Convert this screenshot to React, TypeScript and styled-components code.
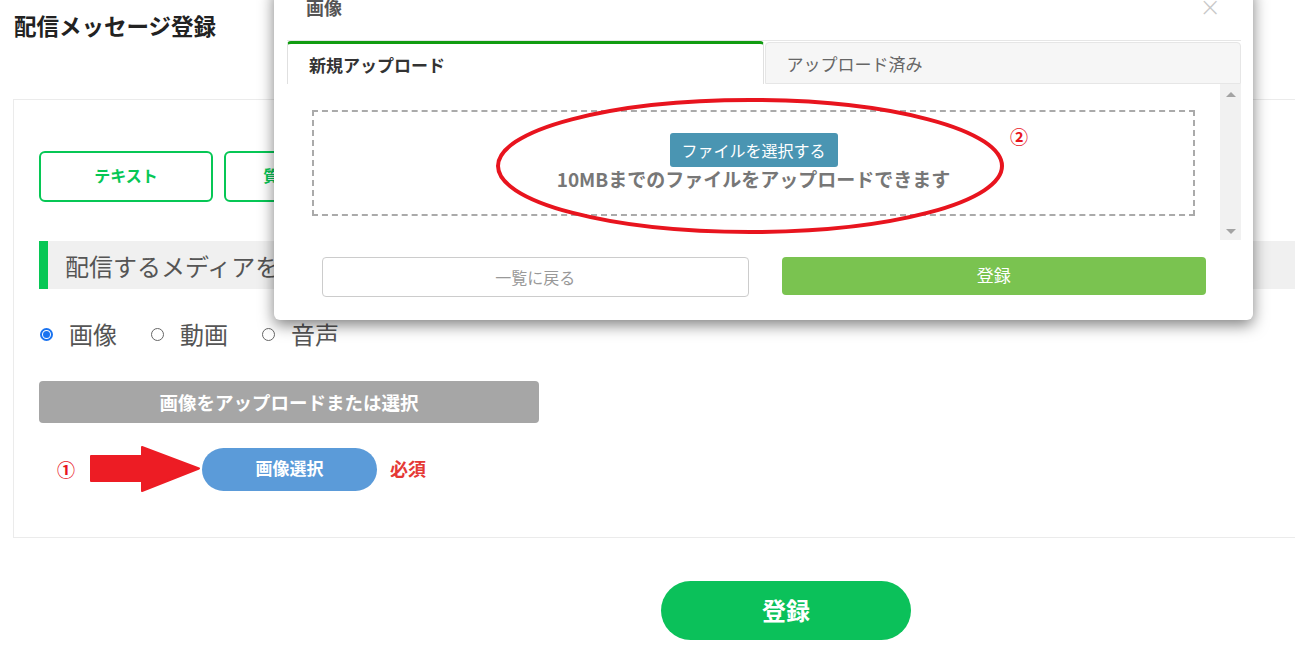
import React from 'react';
import styled, { createGlobalStyle } from 'styled-components';

const GlobalStyle = createGlobalStyle`
  html, body {
    margin: 0;
    padding: 0;
    background: #fff;
    overflow: hidden;
  }
  body {
    font-family: "Noto Sans CJK JP", "Noto Sans", sans-serif;
    color: #333;
  }
  * {
    box-sizing: border-box;
  }
`;

const Page = styled.div`
  position: relative;
  width: 1295px;
  height: 652px;
  overflow: hidden;
`;

const Title = styled.h1`
  margin: 10px 0 59px 14px;
  font-size: 22.5px;
  line-height: 30px;
  font-weight: 700;
  color: #222;
`;

const Card = styled.div`
  margin-left: 13px;
  margin-right: -40px;
  border: 1px solid #ebebeb;
  padding: 51px 0 45px 25px;
`;

const TypeButtons = styled.div`
  display: flex;
  gap: 11px;
`;

const TypeButton = styled.button`
  width: 174px;
  height: 51px;
  border: 2px solid #06c755;
  border-radius: 6px;
  background: #fff;
  color: #06c755;
  font-family: inherit;
  font-size: 16px;
  font-weight: 700;
  padding-bottom: 4px;
`;

const SectionHeading = styled.div`
  margin-top: 39px;
  height: 48px;
  display: flex;
  align-items: center;
  background: #f0f0f0;
  border-left: 9px solid #06c755;
  padding-left: 17px;
  font-size: 24px;
  color: #555;
  white-space: nowrap;
`;

const RadioRow = styled.div`
  margin-top: 28px;
  display: flex;
  gap: 34px;
  height: 34px;
  align-items: center;
  padding-left: 1px;
`;

const RadioLabel = styled.label`
  display: flex;
  align-items: center;
  gap: 16px;
  font-size: 24px;
  line-height: 34px;
  color: #555;
`;

const RadioMark = styled.span<{ $checked?: boolean }>`
  width: 13px;
  height: 13px;
  border-radius: 50%;
  border: ${(p) => (p.$checked ? '2px solid #1a73f0' : '1px solid #666')};
  display: flex;
  align-items: center;
  justify-content: center;
  &::after {
    content: '';
    display: ${(p) => (p.$checked ? 'block' : 'none')};
    width: 7px;
    height: 7px;
    border-radius: 50%;
    background: #1a73f0;
  }
`;

const UploadBar = styled.div`
  margin-top: 30px;
  width: 500px;
  height: 42px;
  border-radius: 4px;
  background: #a6a6a6;
  color: #fff;
  font-size: 18.5px;
  font-weight: 700;
  display: flex;
  align-items: center;
  justify-content: center;
`;

const SelectRow = styled.div`
  margin-top: 23px;
  display: flex;
  align-items: center;
  padding-left: 18px;
`;

const StepMark = styled.span`
  color: #e8141e;
  font-size: 18px;
  font-weight: 700;
  margin-right: 15px;
`;

const ArrowIcon = styled.svg`
  display: block;
  margin-right: 2px;
`;

const PillButton = styled.button`
  width: 175px;
  height: 43px;
  border: none;
  border-radius: 22px;
  background: #5b9bd9;
  color: #fff;
  font-family: inherit;
  font-size: 17px;
  font-weight: 700;
  line-height: 20px;
  padding-bottom: 3px;
`;

const Required = styled.span`
  margin-left: 13px;
  color: #e53935;
  font-size: 18px;
  font-weight: 700;
  margin-bottom: 3px;
`;

const Footer = styled.div`
  margin-top: 43px;
  padding-left: 661px;
`;

const SubmitButton = styled.button`
  width: 250px;
  height: 59px;
  border: none;
  border-radius: 30px;
  background: #0bc15a;
  color: #fff;
  font-family: inherit;
  font-size: 24px;
  font-weight: 700;
  padding-bottom: 3px;
`;

/* modal */

const Modal = styled.div`
  position: absolute;
  left: 274px;
  top: -14px;
  width: 979px;
  background: #fff;
  border-radius: 6px;
  box-shadow: 0 5px 15px rgba(0, 0, 0, 0.5);
`;

const ModalHeader = styled.div`
  height: 55px;
  display: flex;
  align-items: flex-start;
  justify-content: space-between;
  margin: 0 12px 0 13px;
  padding: 11px 20px 0 19px;
  border-bottom: 1px solid #e6e6e6;
`;

const ModalTitle = styled.div`
  font-size: 18px;
  line-height: 20px;
  font-weight: 700;
  color: #555;
`;

const CloseButton = styled.span`
  font-size: 26px;
  line-height: 20px;
  color: #c8c8c8;
  font-family: "DejaVu Sans", sans-serif;
  font-weight: 300;
`;

const Tabs = styled.div`
  margin: 0 12px 0 13px;
  height: 43px;
  display: flex;
  align-items: flex-end;
`;

const Tab = styled.div<{ $active?: boolean }>`
  flex: 1;
  display: flex;
  align-items: center;
  padding-left: 21px;
  font-size: 17px;
  border-radius: 4px 4px 0 0;
  ${(p) =>
    p.$active
      ? `
    height: 43px;
    background: #fff;
    color: #333;
    font-weight: 700;
    border-top: 3px solid #119c11;
    border-left: 1px solid #e0e0e0;
    border-right: 1px solid #e0e0e0;
  `
      : `
    height: 42px;
    background: #f6f6f6;
    color: #666;
    border: 1px solid #e6e6e6;
    margin-left: 1px;
  `}
`;

const PanelWrap = styled.div`
  margin: 0 12px 0 13px;
  height: 156px;
  display: flex;
`;

const Panel = styled.div`
  flex: 1;
  padding: 26px 25px 0 25px;
`;

const DropZone = styled.div`
  height: 106px;
  border: 2px dashed #aaa;
  display: flex;
  flex-direction: column;
  align-items: center;
  padding-top: 21px;
`;

const FileButton = styled.button`
  width: 168px;
  height: 34px;
  border: none;
  border-radius: 3px;
  background: #4a95b2;
  color: #fff;
  font-family: inherit;
  font-size: 16px;
`;

const DropText = styled.div`
  margin-top: -1px;
  font-size: 19px;
  line-height: 26px;
  font-weight: 700;
  color: #777;
`;

const Scrollbar = styled.div`
  width: 21px;
  background: #f1f1f1;
  display: flex;
  flex-direction: column;
  justify-content: space-between;
  align-items: center;
  padding: 8px 0 6px;
`;

const ScrollArrow = styled.span<{ $down?: boolean }>`
  width: 0;
  height: 0;
  border-left: 5px solid transparent;
  border-right: 5px solid transparent;
  ${(p) => (p.$down ? 'border-top: 5px solid #a3a3a3;' : 'border-bottom: 5px solid #a3a3a3;')}
`;

const ModalFooter = styled.div`
  display: flex;
  align-items: flex-start;
  gap: 33px;
  padding: 17px 47px 23px 48px;
`;

const BackButton = styled.button`
  flex: 1;
  height: 40px;
  border: 1px solid #ccc;
  border-radius: 4px;
  background: #fff;
  color: #999;
  font-family: inherit;
  font-size: 16px;
`;

const ConfirmButton = styled.button`
  flex: 1;
  height: 38px;
  border: none;
  border-radius: 4px;
  background: #7ac350;
  color: #fff;
  font-family: inherit;
  font-size: 17px;
  padding-bottom: 4px;
`;

const EllipseMark = styled.svg`
  position: absolute;
  left: 220px;
  top: 110px;
  pointer-events: none;
`;

const StepTwo = styled.span`
  position: absolute;
  left: 736px;
  top: 137px;
  color: #e8141e;
  font-size: 18px;
  line-height: 26px;
  font-weight: 700;
`;

const radios = [
  { label: '画像', checked: true },
  { label: '動画', checked: false },
  { label: '音声', checked: false },
];

const App: React.FC = () => {
  return (
    <Page>
      <GlobalStyle />
      <Title>配信メッセージ登録</Title>
      <Card>
        <TypeButtons>
          <TypeButton>テキスト</TypeButton>
          <TypeButton>質問フォーム</TypeButton>
        </TypeButtons>
        <SectionHeading>配信するメディアを選択してください</SectionHeading>
        <RadioRow>
          {radios.map((r) => (
            <RadioLabel key={r.label}>
              <RadioMark $checked={r.checked} />
              {r.label}
            </RadioLabel>
          ))}
        </RadioRow>
        <UploadBar>画像をアップロードまたは選択</UploadBar>
        <SelectRow>
          <StepMark>①</StepMark>
          <ArrowIcon width="110" height="46" viewBox="0 0 110 46">
            <polygon
              points="1,10 52,10 52,1 109,22.5 52,45 52,35 1,35"
              fill="#ed1c24"
              stroke="#ed1c24"
              strokeWidth="2"
              strokeLinejoin="round"
            />
          </ArrowIcon>
          <PillButton>画像選択</PillButton>
          <Required>必須</Required>
        </SelectRow>
      </Card>
      <Footer>
        <SubmitButton>登録</SubmitButton>
      </Footer>

      <Modal>
        <ModalHeader>
          <ModalTitle>画像</ModalTitle>
          <CloseButton>×</CloseButton>
        </ModalHeader>
        <Tabs>
          <Tab $active>新規アップロード</Tab>
          <Tab>アップロード済み</Tab>
        </Tabs>
        <PanelWrap>
          <Panel>
            <DropZone>
              <FileButton>ファイルを選択する</FileButton>
              <DropText>10MBまでのファイルをアップロードできます</DropText>
            </DropZone>
          </Panel>
          <Scrollbar>
            <ScrollArrow />
            <ScrollArrow $down />
          </Scrollbar>
        </PanelWrap>
        <ModalFooter>
          <BackButton>一覧に戻る</BackButton>
          <ConfirmButton>登録</ConfirmButton>
        </ModalFooter>
        <EllipseMark width="512" height="140" viewBox="0 0 512 140">
          <ellipse cx="256" cy="70" rx="252" ry="66" fill="none" stroke="#e8141e" strokeWidth="4" />
        </EllipseMark>
        <StepTwo>②</StepTwo>
      </Modal>
    </Page>
  );
};

export default App;
